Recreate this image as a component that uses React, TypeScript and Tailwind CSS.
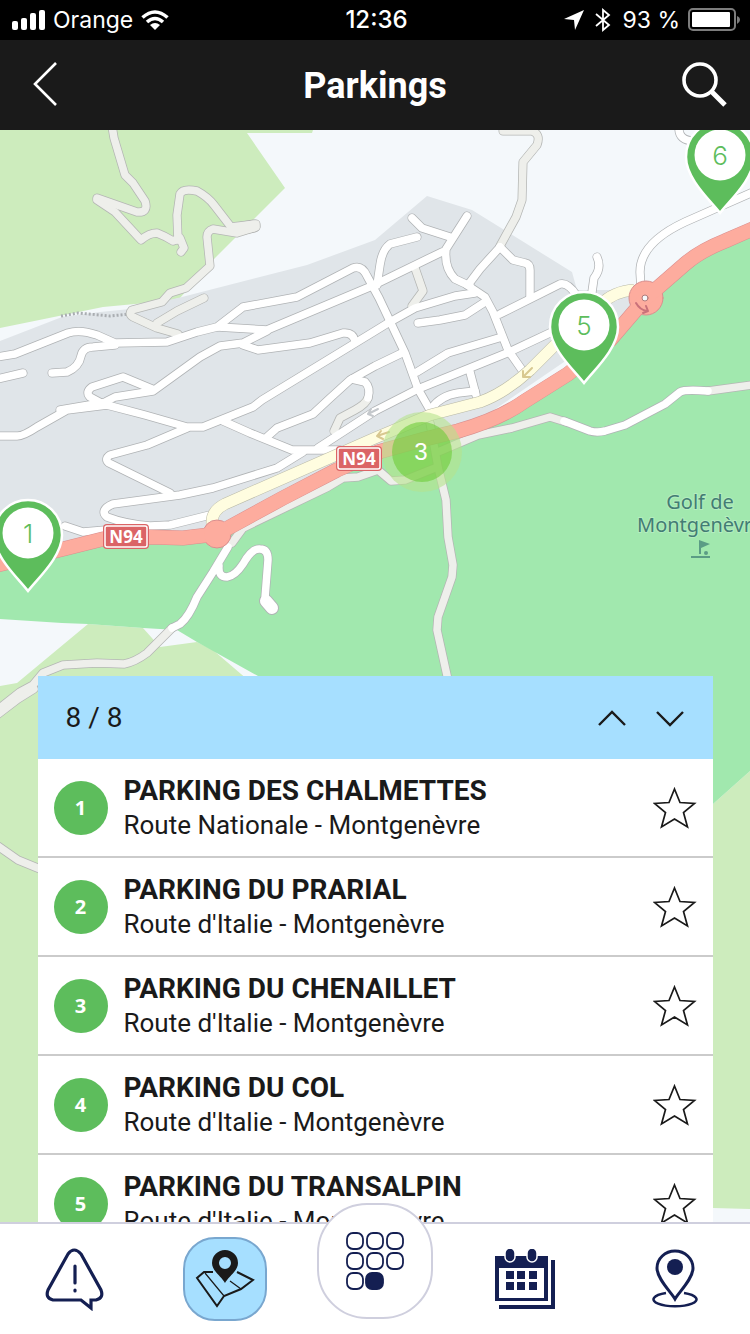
const parkings = [
  { id: 1, name: 'PARKING DES CHALMETTES', address: 'Route Nationale - Montgenèvre' },
  { id: 2, name: 'PARKING DU PRARIAL', address: "Route d'Italie - Montgenèvre" },
  { id: 3, name: 'PARKING DU CHENAILLET', address: "Route d'Italie - Montgenèvre" },
  { id: 4, name: 'PARKING DU COL', address: "Route d'Italie - Montgenèvre" },
  { id: 5, name: 'PARKING DU TRANSALPIN', address: "Route d'Italie - Montgenèvre" },
];

const tracks = [
  'M112 126 L114 138 L125 175 L133 183 L145 201 Q149 213 137 212 L97 198',
  'M97 200 L115 212 L141 240 Q149 233 157 233 Q165 236 173 241 L180 238 L184 248 L181 252',
  'M178 240 L177 215 L180 194 Q183 188 197 191 Q208 197 214 205 L231 227 L256 224',
  'M256 227 L237 233 L213 229 Q207 231 207 237 L210 266 L186 288 L170 293 L162 302 L132 310 Q128 314 133 317 L157 328 L178 334',
  'M157 323 L177 311 L204 298',
  'M503 131 L532 131 Q541 134 537 145 L523 162 L522 200 L516 217 L500 246',
  'M415 268 L423 291 L412 306',
  'M368 398 Q366 404 355 410 L340 418 L334 431',
  'M378 470 L358 477 L343 478 L328 487 L243 528 L232 543',
  'M378 470 L391 481 L405 480 L435 468',
  'M438 452 L478 435 L512 428 L550 417 L566 422',
  'M708 391 L752 385',
  'M430 423 L438 467 L446 500 L448 537 L453 565 L452 577 L438 617 L437 630 L448 680',
  'M172 628 L147 653 Q135 662 124 664 L97 663 L63 665 L43 673 L33 685 L20 692 L-3 710',
  'M34 689 L18 699 L-3 715',
  'M-2 846 L18 860 L40 869',
];

const streets = [
  'M-3 357 L15 354 L68 333 Q80 329 97 335 L115 343 L167 342 L197 332 L217 327 L243 307 L297 297 L353 268 Q362 265 367 276 L379 298 L405 353 L418 389 L430 410',
  'M-3 379 L23 373',
  'M52 373 L67 372 Q79 367 81 356 Q83 347 93 347 L115 345',
  'M218 327 L267 330 L372 286 L442 252',
  'M107 401 L115 397 L153 391 L200 357 L220 346 L243 343 L267 331',
  'M243 345 L258 350 L310 343 L343 333 Q353 332 355 341',
  'M475 293 L455 296 L415 308 L388 323 L375 331 L262 400 L253 407 L223 419 L203 427 L187 427 L145 415 L107 405 L67 410 L37 427 Q22 437 16 436 L-3 436',
  'M60 410 L107 402',
  'M152 389 L123 377 L92 387 Q85 392 90 397 L103 404',
  'M402 353 L375 366 L350 380 L328 400 L313 414 L277 428 L267 437',
  'M352 379 L365 382 Q371 388 368 398',
  'M223 421 L250 433 L292 450 L340 450',
  'M187 428 L147 445 L110 455 Q104 459 109 463 L170 493',
  'M303 452 L277 468 L213 488 L180 495 L113 504 Q99 510 107 517 Q125 524 150 526 L170 525 L210 515',
  'M65 526 L83 532 L106 530',
  'M318 448 L375 411 L418 389 L507 353 L554 331',
  'M417 372 L448 353 L502 337',
  'M470 372 L476 395',
  'M432 408 Q440 396 458 393 L475 391',
  'M467 285 L485 297 L493 312 L508 350 L522 370',
  'M500 247 L480 269 L468 285',
  'M500 247 L513 260 L525 263 Q530 264 530 270 L530 297',
  'M500 314 L560 284 Q568 282 577 296',
  'M418 323 L440 320 L465 315 L485 302',
  'M412 218 L422 228 L450 237',
  'M467 216 L446 249 Q444 268 455 279 L470 286',
  'M417 237 L390 244 Q382 250 380 265 L377 285',
  'M597 257 Q602 268 594 278 L592 292',
  'M679 127 Q678 141 695 141',
  'M753 192 L685 222 Q640 243 640 272 L641 288',
  'M228 547 L213 572 L197 597 Q189 617 180 624 L172 628',
  'M219 566 Q218 577 227 577 Q235 576 243 564 Q252 548 260 549 Q268 549 268 560 L265 598',
  'M564 421 L590 431 Q597 433 605 431 L625 425 L665 404 L680 392 Q685 389 708 391',
];

const slipRoad =
  'M212 524 Q211 511 225 504 L375 438 L430 415 L480 402 Q505 393 530 370 L560 340 L600 305 Q614 291 634 290';
const mainRoad =
  'M-3 565 L63 549 L103 539 L150 537 L183 538 L217 534 L283 498 L337 470 L378 452 L425 439 L458 431 Q500 419 525 401 L568 374 L610 340 L646 298 L685 264 Q700 251 725 241 L755 228';

function Pin({ x, y, label }: { x: number; y: number; label: string }) {
  return (
    <g transform={`translate(${x} ${y})`}>
      <path
        d="M0 58 C-9 46 -34 24 -34 2 C-34 -19 -18 -33 0 -33 C18 -33 34 -19 34 2 C34 24 9 46 0 58Z"
        fill="#5dbd5c"
        stroke="#fff"
        strokeWidth="2.5"
      />
      <circle r="25.5" fill="#fff" />
      <text y="10" textAnchor="middle" fill="#5dbd5c" className="font-['Inter',sans-serif] text-[26px] font-light">
        {label}
      </text>
    </g>
  );
}

function RoadShield({ x, y }: { x: number; y: number }) {
  return (
    <g transform={`translate(${x} ${y})`}>
      <rect width="46" height="25" rx="4" fill="#db6466" />
      <rect x="2" y="2" width="42" height="21" rx="2" fill="#db6466" stroke="#fff" strokeWidth="1.5" />
      <text x="23" y="19" textAnchor="middle" fill="#fff" className="font-['Open_Sans',sans-serif] text-[17px] font-bold">
        N94
      </text>
    </g>
  );
}

function MapView() {
  return (
    <svg
      viewBox="0 130 750 1092"
      preserveAspectRatio="xMidYMin slice"
      className="absolute inset-0 h-full w-full"
      role="img"
      aria-label="Carte des parkings"
    >
      <rect y="130" width="750" height="1092" fill="#f4f8fb" />
      <path d="M0 130 H313 L312 133 H247 L285 188 L215 258 L180 298 L167 301 L103 307 L0 328Z" fill="#cdecbd" />
      <path
        d="M0 341 L62 317 L100 312 L130 309 L182 297 L307 265 L375 240 L427 196 L472 210 L572 272 L577 290 L640 290 L640 310 L450 440 L215 540 L0 575Z"
        fill="#e0e5e9"
      />
      <path
        d="M0 686 L17 683 L88 624 L143 628 L160 647 L197 642 L213 650 L248 680 L500 900 L713 804 L750 771 V1209 L713 1208 V1222 H0Z"
        fill="#cdecbd"
      />
      <path
        d="M0 563 L103 538 L217 534 L337 470 L425 439 L525 401 L610 340 L646 298 L685 264 L750 229 V771 L713 804 L600 900 L258 676 L197 642 L177 630 L143 628 L88 624 L62 623 L0 619Z"
        fill="#a1e8ae"
      />
      <path d="M61 316 L78 313 L110 316 L130 314" fill="none" stroke="#a9adb1" strokeWidth="3" strokeDasharray="2 2" />

      <g fill="none" strokeLinecap="round" strokeLinejoin="round">
        {/* outlines first, so that crossings stay open */}
        <g stroke="#b4b6b4" strokeWidth="9">
          {tracks.map((d) => (
            <path key={d} d={d} />
          ))}
          <path d="M238 229 L254 226" strokeWidth="13" />
        </g>
        <g stroke="#b0b3b5" strokeWidth="9">
          {streets.map((d) => (
            <path key={d} d={d} />
          ))}
          <path d="M266 601 L272 608" strokeWidth="14" />
        </g>
        <g stroke="#eeefeb" strokeWidth="7.500">
          {tracks.map((d) => (
            <path key={d} d={d} />
          ))}
          <path d="M238 229 L254 226" strokeWidth="11" />
        </g>
        <g stroke="#fff" strokeWidth="7.500">
          {streets.map((d) => (
            <path key={d} d={d} />
          ))}
          <path d="M266 601 L272 608" strokeWidth="12" />
        </g>
        <path d={slipRoad} stroke="#b9b9a6" strokeWidth="12" strokeLinecap="butt" />
        <path d={slipRoad} stroke="#fffde0" strokeWidth="11" strokeLinecap="butt" />
        <path d={mainRoad} stroke="#d98f8f" strokeWidth="15" />
        <circle cx="217" cy="534" r="14" fill="#fdac9e" stroke="#d98f8f" />
        <circle cx="646" cy="298" r="17" fill="#fdac9e" stroke="#d98f8f" />
        <path d={mainRoad} stroke="#fdac9e" strokeWidth="14" />
        <circle cx="217" cy="534" r="13" fill="#fdac9e" />
        <circle cx="645" cy="298" r="3" fill="#f4f8fb" stroke="#b07a7a" />
        <path d="M636 303 Q640 310 647 311 M643 313 L648 311 L646 306" stroke="#c9717a" strokeWidth="2" />
        <g stroke="#d8c890" strokeWidth="2">
          <path d="M532 368 L523 377 M523 371 V377 H530" />
          <path d="M389 432 L377 436 M381 431 L377 436 L383 439" />
        </g>
        <path d="M378 409 L368 414 M371 409 L368 414 L373 416" stroke="#c4c8cc" strokeWidth="2" />
      </g>

      <text
        y="509"
        textAnchor="middle"
        fill="#437c74"
        stroke="#b4edbf"
        strokeWidth="2"
        paintOrder="stroke"
        className="font-['Noto_Sans',sans-serif] text-[20px]"
      >
        <tspan x="700">Golf de</tspan>
        <tspan x="700" dy="23">
          Montgenèvre
        </tspan>
      </text>
      <g fill="#5b9c85">
        <path d="M699 540 L710 544 L701 548 V554 H699Z" />
        <circle cx="706" cy="553" r="2" />
        <rect x="691" y="556" width="19" height="2" />
      </g>

      <RoadShield x={103} y={524} />
      <RoadShield x={336} y={446} />

      <circle cx="422" cy="452" r="40" fill="#b5e28c" fillOpacity="0.6" />
      <circle cx="422" cy="452" r="30" fill="#6ecc39" fillOpacity="0.6" />
      <text x="421" y="460" textAnchor="middle" fill="#fff" className="font-['Liberation_Sans',sans-serif] text-[24px]">
        3
      </text>

      <Pin x={28} y={533} label="1" />
      <Pin x={584} y={325} label="5" />
      <Pin x={720} y={155} label="6" />
    </svg>
  );
}

function StatusBar() {
  return (
    <div className="grid h-10 shrink-0 grid-cols-[1fr_auto_1fr] items-center bg-black pr-[9px] pl-3 font-['Inter',sans-serif] text-[23px] leading-10 text-white">
      <div className="flex items-center gap-2">
        <svg width="33" height="20" viewBox="0 0 33 20" fill="currentColor">
          <rect y="11" width="6" height="9" rx="2" />
          <rect x="9" y="8" width="6" height="12" rx="2" />
          <rect x="18" y="3" width="6" height="17" rx="2" />
          <rect x="27" width="6" height="20" rx="2" />
        </svg>
        <span>Orange</span>
        <svg width="28" height="20" viewBox="0 0 28 20" fill="none" stroke="currentColor" strokeWidth="3.6">
          <path d="M1.5 7.5 Q14 -3.5 26.5 7.5" />
          <path d="M6 12 Q14 5 22 12" />
          <path d="M14 20 L9 15 Q14 11 19 15Z" fill="currentColor" stroke="none" />
        </svg>
      </div>
      <span className="text-2xl leading-10 font-medium">12:36</span>
      <div className="flex items-center justify-end gap-2">
        <svg width="20" height="20" viewBox="0 0 20 20" fill="currentColor">
          <path d="M20 0 L11 20 L10 10 L0 9Z" />
        </svg>
        <svg width="22" height="24" viewBox="0 0 22 24" fill="none" stroke="currentColor" strokeWidth="1.8">
          <path d="M4 6 L17 17 L11 22 V2 L17 7 L4 18" />
        </svg>
        <span>93 %</span>
        <svg width="53" height="24" viewBox="0 0 53 24">
          <rect x="1" y="1" width="46" height="21" rx="4" fill="none" stroke="#7d7d7d" strokeWidth="2" />
          <rect x="4" y="4" width="38" height="15" rx="1" fill="#fff" />
          <path d="M49 8 Q52 9 52 12 Q52 14 49 16Z" fill="#7d7d7d" />
        </svg>
      </div>
    </div>
  );
}

function Header() {
  return (
    <header className="flex h-[90px] shrink-0 items-center justify-between bg-[#1a1a1a] px-[22px] text-white">
      <button type="button" aria-label="Retour" className="flex w-12 justify-center">
        <svg width="26" height="46" viewBox="0 0 26 46" fill="none" stroke="currentColor" strokeWidth="2.6">
          <path d="M23 1 L2 22 L23 43" />
        </svg>
      </button>
      <h1 className="pt-0.5 text-4xl font-bold">Parkings</h1>
      <button type="button" aria-label="Rechercher" className="flex w-12 justify-center">
        <svg width="46" height="46" viewBox="0 0 46 46" fill="none" stroke="currentColor">
          <circle cx="19" cy="18" r="16" strokeWidth="3.6" />
          <path d="M30 29 L44 43" strokeWidth="5" />
        </svg>
      </button>
    </header>
  );
}

function ParkingPanel() {
  return (
    <section className="relative mx-[5%] h-1/2 overflow-hidden bg-white text-[#1a1a1a]">
      <div className="flex h-[83px] items-center justify-between bg-[#a6dfff] px-7">
        <span className="text-[28px]">8 / 8</span>
        <div className="flex gap-7">
          <button type="button" aria-label="Précédent">
            <svg width="30" height="18" viewBox="0 0 30 18" fill="none" stroke="currentColor" strokeWidth="2.4">
              <path d="M2 16 L15 3 L28 16" />
            </svg>
          </button>
          <button type="button" aria-label="Suivant">
            <svg width="30" height="18" viewBox="0 0 30 18" fill="none" stroke="currentColor" strokeWidth="2.4">
              <path d="M2 3 L15 16 L28 3" />
            </svg>
          </button>
        </div>
      </div>
      <ul>
        {parkings.map((parking) => (
          <li key={parking.id} className="flex h-[99px] items-center gap-4 border-b-2 border-[#cbcbcb] px-4">
            <span className="flex size-[54px] shrink-0 items-center justify-center rounded-full bg-[#5dbd5c] font-['Open_Sans',sans-serif] text-xl font-bold text-white">
              {parking.id}
            </span>
            <div className="min-w-0 flex-1">
              <h2 className="truncate text-[28px] leading-[35px] font-bold">{parking.name}</h2>
              <p className="truncate text-[26px] leading-[35px]">{parking.address}</p>
            </div>
            <button type="button" aria-label={`Ajouter ${parking.name} aux favoris`}>
              <svg width="44" height="42" viewBox="0 0 44 42" fill="none" stroke="currentColor" strokeWidth="1.7">
                <path d="M21.5 2 L27 15.5 L41.5 16.5 L30.5 25.5 L34.5 40 L21.5 32 L8.5 40 L12.5 25.5 L1.5 16.5 L16 15.5Z" />
              </svg>
            </button>
          </li>
        ))}
      </ul>
    </section>
  );
}

function TabBar() {
  return (
    <nav className="relative grid h-28 shrink-0 grid-cols-5 items-center justify-items-center border-t-2 border-[#cfcfde] bg-white text-[#141f52]">
      <a href="#alertes" aria-label="Alertes">
        <svg width="60" height="64" viewBox="0 0 60 64" fill="none" stroke="currentColor" strokeWidth="3.2">
          <path d="M36 53 H8 Q0 51 3 43 L23 7 Q29 -1 36 7 L56 43 Q59 51 51 53 H46 V61 Z" />
          <path d="M30 19 V36 M30 43 V44" strokeLinecap="round" />
        </svg>
      </a>
      <a
        href="#carte"
        aria-label="Carte"
        aria-current="page"
        className="flex size-[84px] items-center justify-center rounded-[32px] border-2 border-[#79a7cf] bg-[#a6dfff] text-[#1a1a1a]"
      >
        <svg width="60" height="58" viewBox="0 0 60 58" fill="none" stroke="currentColor" strokeWidth="2">
          <path d="M18 22 L9 22 L2 28 L22 56 L29 46 L46 39 L58 30 L42 22" />
          <path d="M10 23 L29 46 M35 31 L46 39" strokeWidth="1.2" />
          <path
            d="M30 33 C27 27 17 21 17 13 A13 13 0 0 1 43 13 C43 21 33 27 30 33Z M30 7 A6 6 0 1 0 30 19 A6 6 0 1 0 30 7Z"
            fill="currentColor"
            fillRule="evenodd"
            stroke="none"
          />
        </svg>
      </a>
      <button
        type="button"
        aria-label="Menu"
        className="-mt-9 flex size-[116px] items-center justify-center rounded-[50px] border-2 border-[#cfcfde] bg-white"
      >
        <svg width="58" height="58" viewBox="0 0 58 58" fill="none" stroke="currentColor" strokeWidth="1.8">
          {[1, 21, 41].map((x) => (
            <g key={x}>
              <rect x={x} y="1" width="16" height="16" rx="6" />
              <rect x={x} y="21" width="16" height="16" rx="6" />
            </g>
          ))}
          <rect x="1" y="41" width="16" height="16" rx="6" />
          <rect x="20" y="41" width="17" height="16" rx="6" fill="currentColor" />
        </svg>
      </button>
      <a href="#agenda" aria-label="Agenda">
        <svg width="60" height="60" viewBox="0 0 60 60" fill="currentColor">
          <path d="M0 7 H53 V52 H0Z M4 19 V49 H49 V19Z" fillRule="evenodd" />
          <path d="M56 11 H60 V60 H4 V56 H56Z" />
          {[11, 22, 34].map((x) => (
            <g key={x}>
              <rect x={x} y="22" width="8" height="8" />
              <rect x={x} y="33" width="8" height="8" />
            </g>
          ))}
          <g stroke="#fff" strokeWidth="1.5">
            <rect x="10" y="-1" width="10" height="14" rx="5" />
            <rect x="32" y="-1" width="10" height="14" rx="5" />
          </g>
        </svg>
      </a>
      <a href="#proximite" aria-label="À proximité">
        <svg width="46" height="60" viewBox="0 0 46 60" fill="none" stroke="currentColor" strokeWidth="3">
          <path d="M23 50 C19 43 5 30 5 19 A18 17 0 0 1 41 19 C41 30 27 43 23 50Z" />
          <circle cx="23" cy="18" r="8" fill="currentColor" stroke="none" />
          <path d="M14 44 A21.5 7 0 1 0 32 44" strokeWidth="2.5" />
        </svg>
      </a>
    </nav>
  );
}

export default function App() {
  return (
    <div className="flex h-screen flex-col overflow-hidden font-['Roboto',sans-serif]">
      <StatusBar />
      <Header />
      <main className="relative flex min-h-0 flex-1 flex-col justify-end overflow-hidden">
        <MapView />
        <ParkingPanel />
      </main>
      <TabBar />
    </div>
  );
}
